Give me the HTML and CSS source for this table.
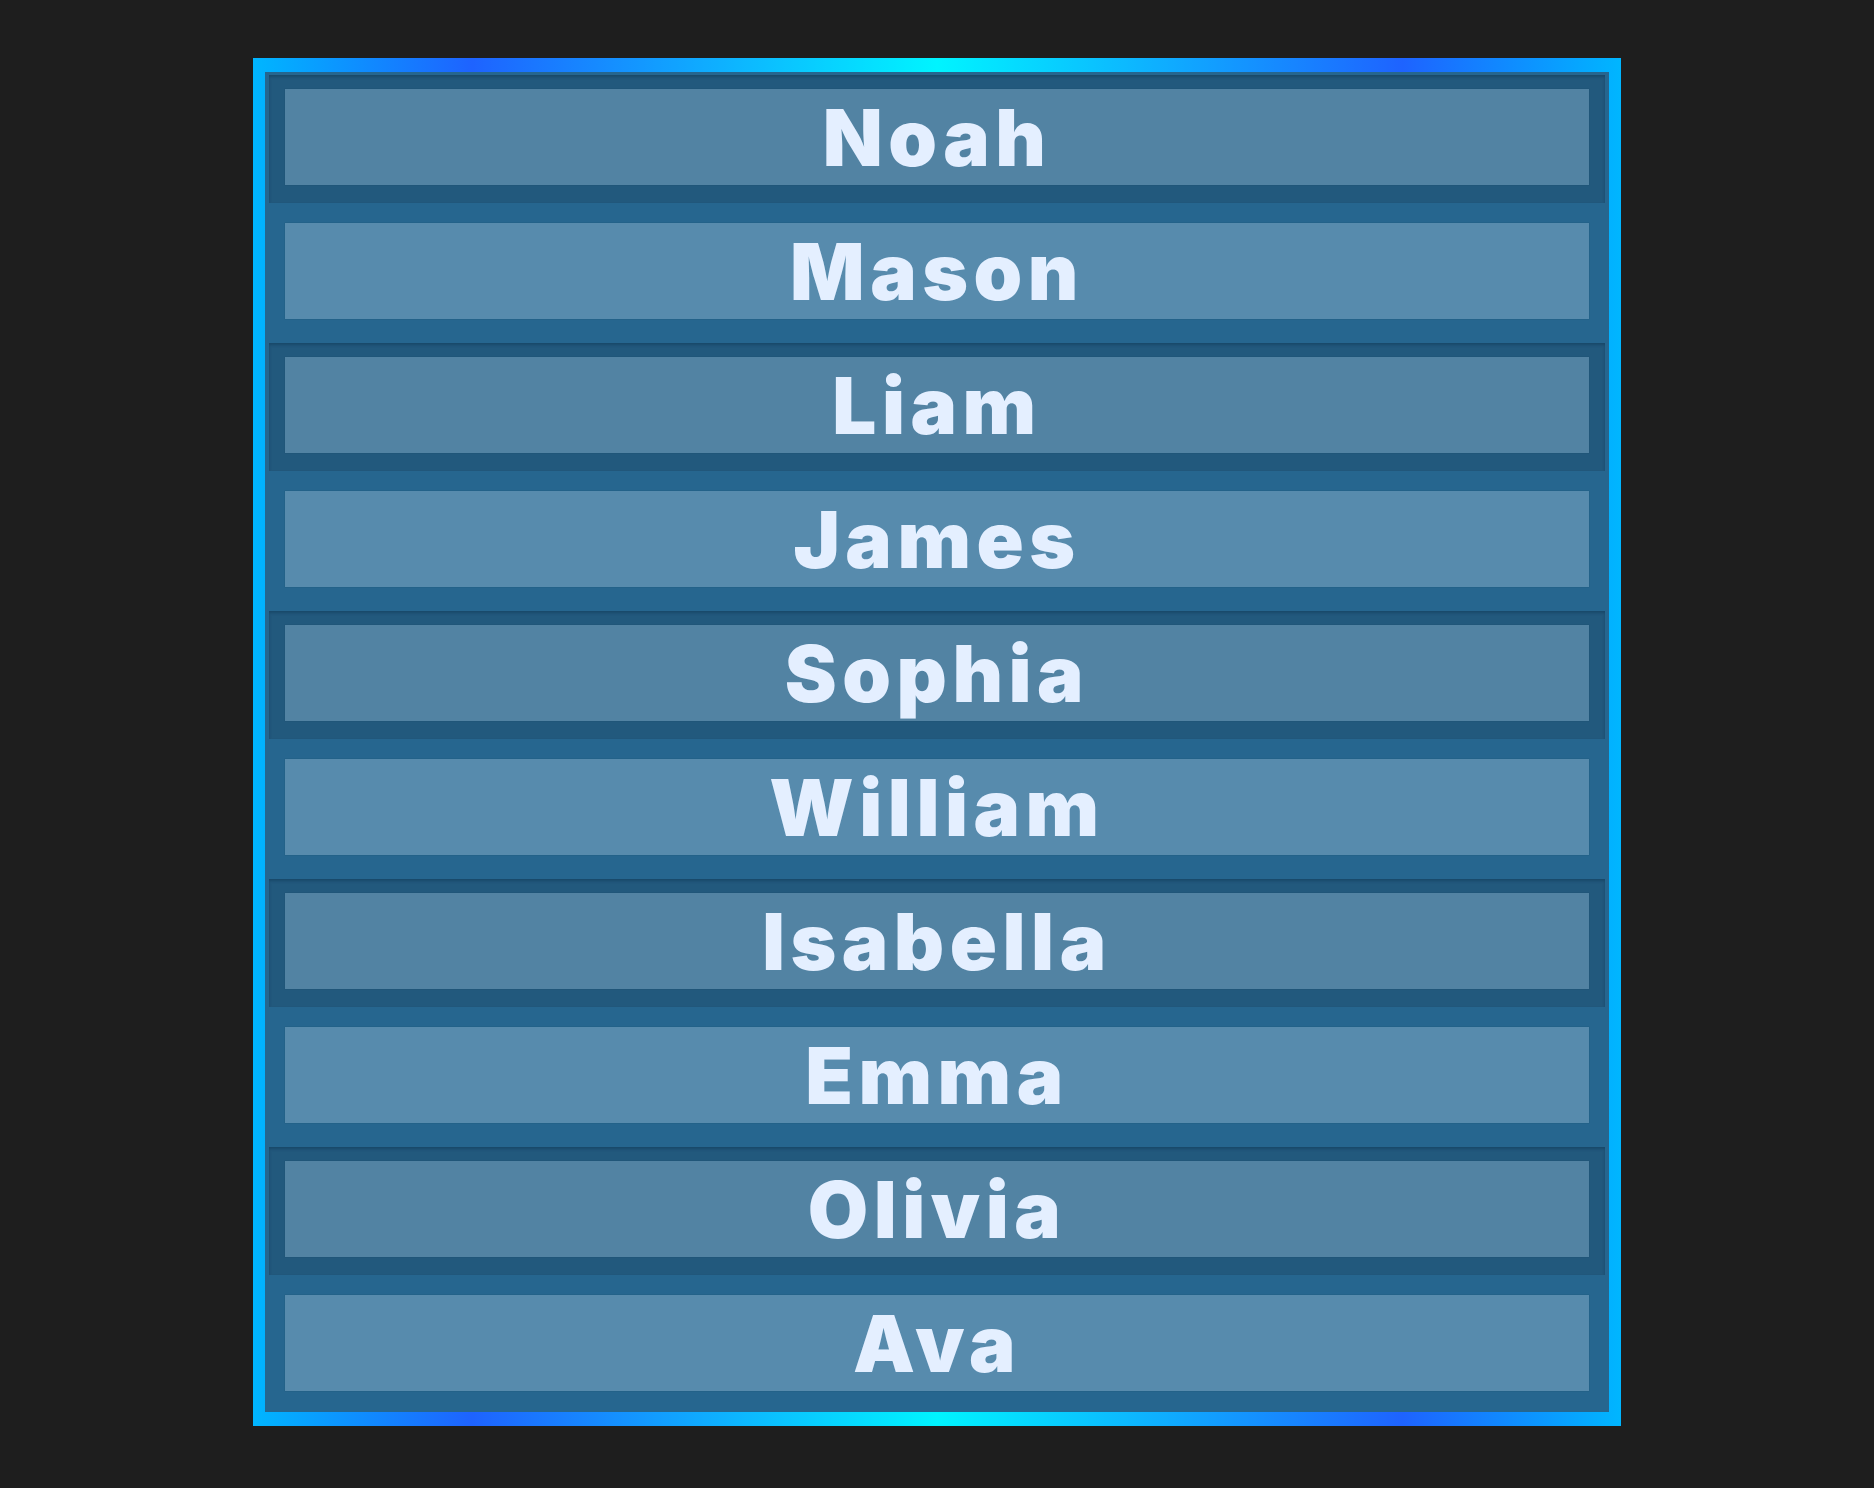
FILE: index.html
```html
<!DOCTYPE html>
<html lang="en">
<head>
<meta charset="utf-8">
<title>Names</title>
<link rel="stylesheet" href="styles.css">
</head>
<body>
  <div class="frame">
    <ul class="list">
      <li class="row"><div class="item"><div class="label">Noah</div></div></li>
      <li class="row"><div class="item"><div class="label">Mason</div></div></li>
      <li class="row"><div class="item"><div class="label">Liam</div></div></li>
      <li class="row"><div class="item"><div class="label">James</div></div></li>
      <li class="row"><div class="item"><div class="label">Sophia</div></div></li>
      <li class="row"><div class="item"><div class="label">William</div></div></li>
      <li class="row"><div class="item"><div class="label">Isabella</div></div></li>
      <li class="row"><div class="item"><div class="label">Emma</div></div></li>
      <li class="row"><div class="item"><div class="label">Olivia</div></div></li>
      <li class="row"><div class="item"><div class="label">Ava</div></div></li>
    </ul>
  </div>
</body>
</html>
```
FILE: styles.css
```css
html, body {
  margin: 0;
  padding: 0;
  background: #1e1e1e;
}

body {
  display: flex;
  justify-content: center;
  padding-top: 58px;
  min-height: 1488px;
  box-sizing: border-box;
}

.frame {
  width: 1368px;
  box-sizing: border-box;
  padding: 14px 12px;
  background: linear-gradient(90deg, #00b6ff 0%, #1e63ff 16%, #00f4ff 50%, #1e63ff 84%, #00b6ff 100%);
  align-self: flex-start;
}

.list {
  list-style: none;
  margin: 0;
  padding: 0;
  background: #26668f;
  display: flex;
  flex-direction: column;
}

.row {
  height: 134px;
  box-sizing: border-box;
  padding: 3px 4px;
}

.item {
  height: 128px;
  box-sizing: border-box;
  padding: 14px 16px 18px;
}

.row:nth-child(odd) .item {
  background: #22597d;
  box-shadow: inset 0 2px 3px rgba(10, 40, 70, 0.35);
}

.label {
  height: 96px;
  display: flex;
  align-items: center;
  justify-content: center;
  background: #578bad;
  box-shadow: 0 0 1px rgba(20, 60, 90, 0.5);
  color: #e4efff;
  font-family: Inter, "Noto Sans", sans-serif;
  font-weight: 900;
  font-size: 78px;
  letter-spacing: 5.5px;
  line-height: 1;
  padding-top: 2px;
  box-sizing: border-box;
}

.row:nth-child(odd) .label {
  background: #5283a3;
}
```
